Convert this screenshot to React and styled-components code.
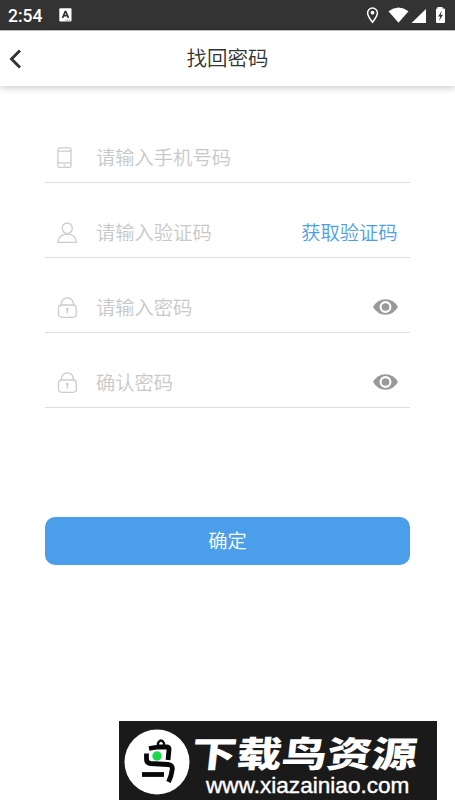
import React from 'react';
import styled, { createGlobalStyle } from 'styled-components';

const App = () => {
	return (
		<Screen>
			<GlobalStyle />
			<StatusBar>
				<Clock>2:54</Clock>
				<KeyboardIcon />
				<StatusIcons />
			</StatusBar>
			<Header>
				<Back aria-label='返回'>
					<svg width='13' height='20' viewBox='0 0 13 20'>
						<path d='M11 1.5 2.5 10 11 18.5' fill='none' stroke='#333' strokeWidth='2.9' />
					</svg>
				</Back>
				<Title>找回密码</Title>
			</Header>
			<Form>
				<Field>
					<PhoneIcon />
					<Input placeholder='请输入手机号码' />
				</Field>
				<Field>
					<UserIcon />
					<Input placeholder='请输入验证码' />
					<CodeLink>获取验证码</CodeLink>
				</Field>
				<Field>
					<LockIcon />
					<Input type='password' placeholder='请输入密码' />
					<EyeIcon />
				</Field>
				<Field>
					<LockIcon />
					<Input type='password' placeholder='确认密码' />
					<EyeIcon />
				</Field>
				<Submit>确定</Submit>
			</Form>
			<Watermark>
				<BirdLogo />
				<Brand>
					<BrandName>下载鸟资源</BrandName>
					<BrandUrl>www.xiazainiao.com</BrandUrl>
				</Brand>
			</Watermark>
		</Screen>
	);
};

const KeyboardIcon = () => (
	<svg width='13' height='14' viewBox='0 0 13 14'>
		<rect x='.3' y='.3' width='12.2' height='13.2' rx='1' fill='#fff' />
		<path d='M3.5 10 6.2 3.5h.6L9.5 10M4.6 7.7h3.8' fill='none' stroke='#333' strokeWidth='1.7' />
		<path d='M6.5 12.2h4.5' stroke='#777' strokeDasharray='1 .8' />
	</svg>
);

const StatusIcons = () => (
	<StatusGroup width='81' height='20' viewBox='0 0 81 20'>
		<path d='M7.5 17.2C5 14 2.6 11 2.6 8a4.9 4.9 0 0 1 9.8 0c0 3-2.4 6-4.9 9.2Z' fill='none' stroke='#fff' strokeWidth='1.5' />
		<circle cx='7.5' cy='7.7' r='1.9' fill='#fff' />
		<path d='M23.5 6.2Q33.5-1.2 43.5 6.2L33.5 17.8Z' fill='#fff' />
		<path d='M61 4v14H46.5Z' fill='#fff' />
		<path d='M72.5 2h5v1.5h1.5q1 0 1 1V17q0 1-1 1h-7q-1 0-1-1V4.5q0-1 1-1h.5Z' fill='#fff' />
		<path d='M77 5.5 73.1 11.5h2.2L74 16 78 9.8h-2.3Z' fill='#333' />
	</StatusGroup>
);

const PhoneIcon = () => (
	<LineIcon viewBox='0 0 20 21'>
		<rect x='.9' y='.9' width='13.1' height='19.4' rx='1.6' />
		<path d='M.9 4.2h13.1M.9 15.9h13.1' />
		<circle cx='7.5' cy='18.2' r='.4' />
	</LineIcon>
);

const UserIcon = () => (
	<LineIcon viewBox='0 0 20 21'>
		<ellipse cx='10.3' cy='6.3' rx='5' ry='5.3' />
		<path d='M.8 20.3C1.5 14.6 5 12.2 10.3 12.2s8.6 2.4 9 8.1Z' />
	</LineIcon>
);

const LockIcon = () => (
	<LineIcon viewBox='0 0 20 21'>
		<rect x='1.5' y='8' width='17.8' height='12.3' rx='3.2' />
		<path d='M4.2 8c.2-4.5 2.8-7.2 6.2-7.2s6 2.7 6.2 7.2' />
		<path d='M10.4 12.5v4' />
		<circle cx='10.4' cy='12' r='.7' fill='#ccc' />
	</LineIcon>
);

const EyeIcon = () => (
	<Eye viewBox='0 0 25 16'>
		<path d='M0 8Q4.5.3 12.5.3T25 8Q20.5 15.7 12.5 15.7T0 8Z' fill='#999' />
		<circle cx='12.5' cy='8' r='4.9' fill='#999' stroke='#fff' strokeWidth='2.1' />
	</Eye>
);

const BirdLogo = () => (
	<Logo viewBox='0 0 66 66'>
		<circle cx='33' cy='33' r='32.5' fill='#fff' />
		<g fill='none' stroke='#080808' strokeWidth='4.8' strokeLinejoin='round'>
			<path d='M34 17v-3q3-5 6 0V17' strokeWidth='2.3' />
			<path d='M25 19.5 34 18H43q2.5 0 2 3L44 31' />
			<path d='M22.5 24.5v6q0 3.5 4 4L44 35.5q5 .5 4.2 5Q47.5 47 44.5 53' />
			<path d='M18 45.5H40' />
		</g>
		<circle cx='33' cy='27' r='4.7' fill='#19d84a' />
	</Logo>
);

const GlobalStyle = createGlobalStyle`
	* {
		box-sizing: border-box;
	}

	body {
		margin: 0;
		background: #fff;
		font-family: 'Noto Sans CJK SC', sans-serif;
	}
`;

const Screen = styled.div`
	position: relative;
	display: flex;
	flex-direction: column;
	height: 810px;
	overflow: hidden;
`;

const StatusBar = styled.div`
	display: flex;
	align-items: center;
	height: 30px;
	padding: 0 9px 0 8px;
	background: #333;
`;

const Clock = styled.span`
	width: 51px;
	padding-top: 2px;
	color: #fff;
	font: 500 17.5px/20px Roboto, sans-serif;
`;

const StatusGroup = styled.svg`
	margin-left: auto;
`;

const Header = styled.header`
	display: flex;
	align-items: center;
	height: 56px;
	flex-shrink: 0;
	border-top: 1px solid #bbb;
	box-shadow: 0 2px 7px rgba(0, 0, 0, 0.2);
`;

const Back = styled.button`
	display: flex;
	width: 45px;
	padding: 0 0 0 9px;
	border: 0;
	background: none;
`;

const Title = styled.h1`
	flex: 1;
	margin: 0 45px 0 0;
	padding-bottom: 4px;
	color: #333;
	font-size: 20.5px;
	font-weight: 350;
	line-height: 30px;
	text-align: center;
`;

const Form = styled.div`
	display: flex;
	flex-direction: column;
	padding: 47px 45.4px 0;
`;

const Field = styled.label`
	display: flex;
	align-items: center;
	height: 50px;
	margin-bottom: 24.9px;
	padding: 0 12px 0 11.6px;
	border-bottom: 1px solid #ddd;
`;

const LineIcon = styled.svg`
	width: 20px;
	height: 21px;
	flex-shrink: 0;
	fill: none;
	stroke: #ccc;
	stroke-width: 1.3;
`;

const Input = styled.input`
	flex: 1;
	min-width: 0;
	height: 40px;
	margin-left: 19px;
	padding: 0 0 1px;
	border: 0;
	outline: 0;
	font: 350 19.3px 'Noto Sans CJK SC', sans-serif;

	&::placeholder {
		color: #c8c8c8;
	}
`;

const CodeLink = styled.span`
	color: #4b9eea;
	font-size: 19.3px;
	font-weight: 350;
	line-height: 30px;
`;

const Eye = styled.svg`
	width: 25px;
	height: 16px;
`;

const Submit = styled.button`
	height: 48px;
	margin-top: 84.4px;
	padding: 0 0 2px;
	border: 0;
	border-radius: 10px;
	color: #fff;
	background: #4b9eea;
	font: 350 19.3px 'Noto Sans CJK SC', sans-serif;
`;

const Watermark = styled.div`
	position: absolute;
	right: 18px;
	bottom: 10px;
	display: flex;
	width: 318px;
	height: 79px;
	padding: 8px 0 0 5px;
	background: #1a1a1a;
	color: #fff;
`;

const Logo = styled.svg`
	width: 66px;
	height: 66px;
	flex-shrink: 0;
`;

const Brand = styled.div`
	display: flex;
	flex-direction: column;
	width: 232px;
	margin-left: 3px;
`;

const BrandName = styled.span`
	margin-left: -1px;
	font-size: 35.5px;
	font-weight: 900;
	line-height: 46px;
	white-space: nowrap;
	transform: scaleX(1.27) skewX(-5deg);
	transform-origin: 0 50%;
`;

const BrandUrl = styled.span`
	margin-left: 13px;
	font: 22.6px/22px 'Liberation Sans', sans-serif;
	-webkit-text-stroke: 0.4px #fff;
`;

export default App;
